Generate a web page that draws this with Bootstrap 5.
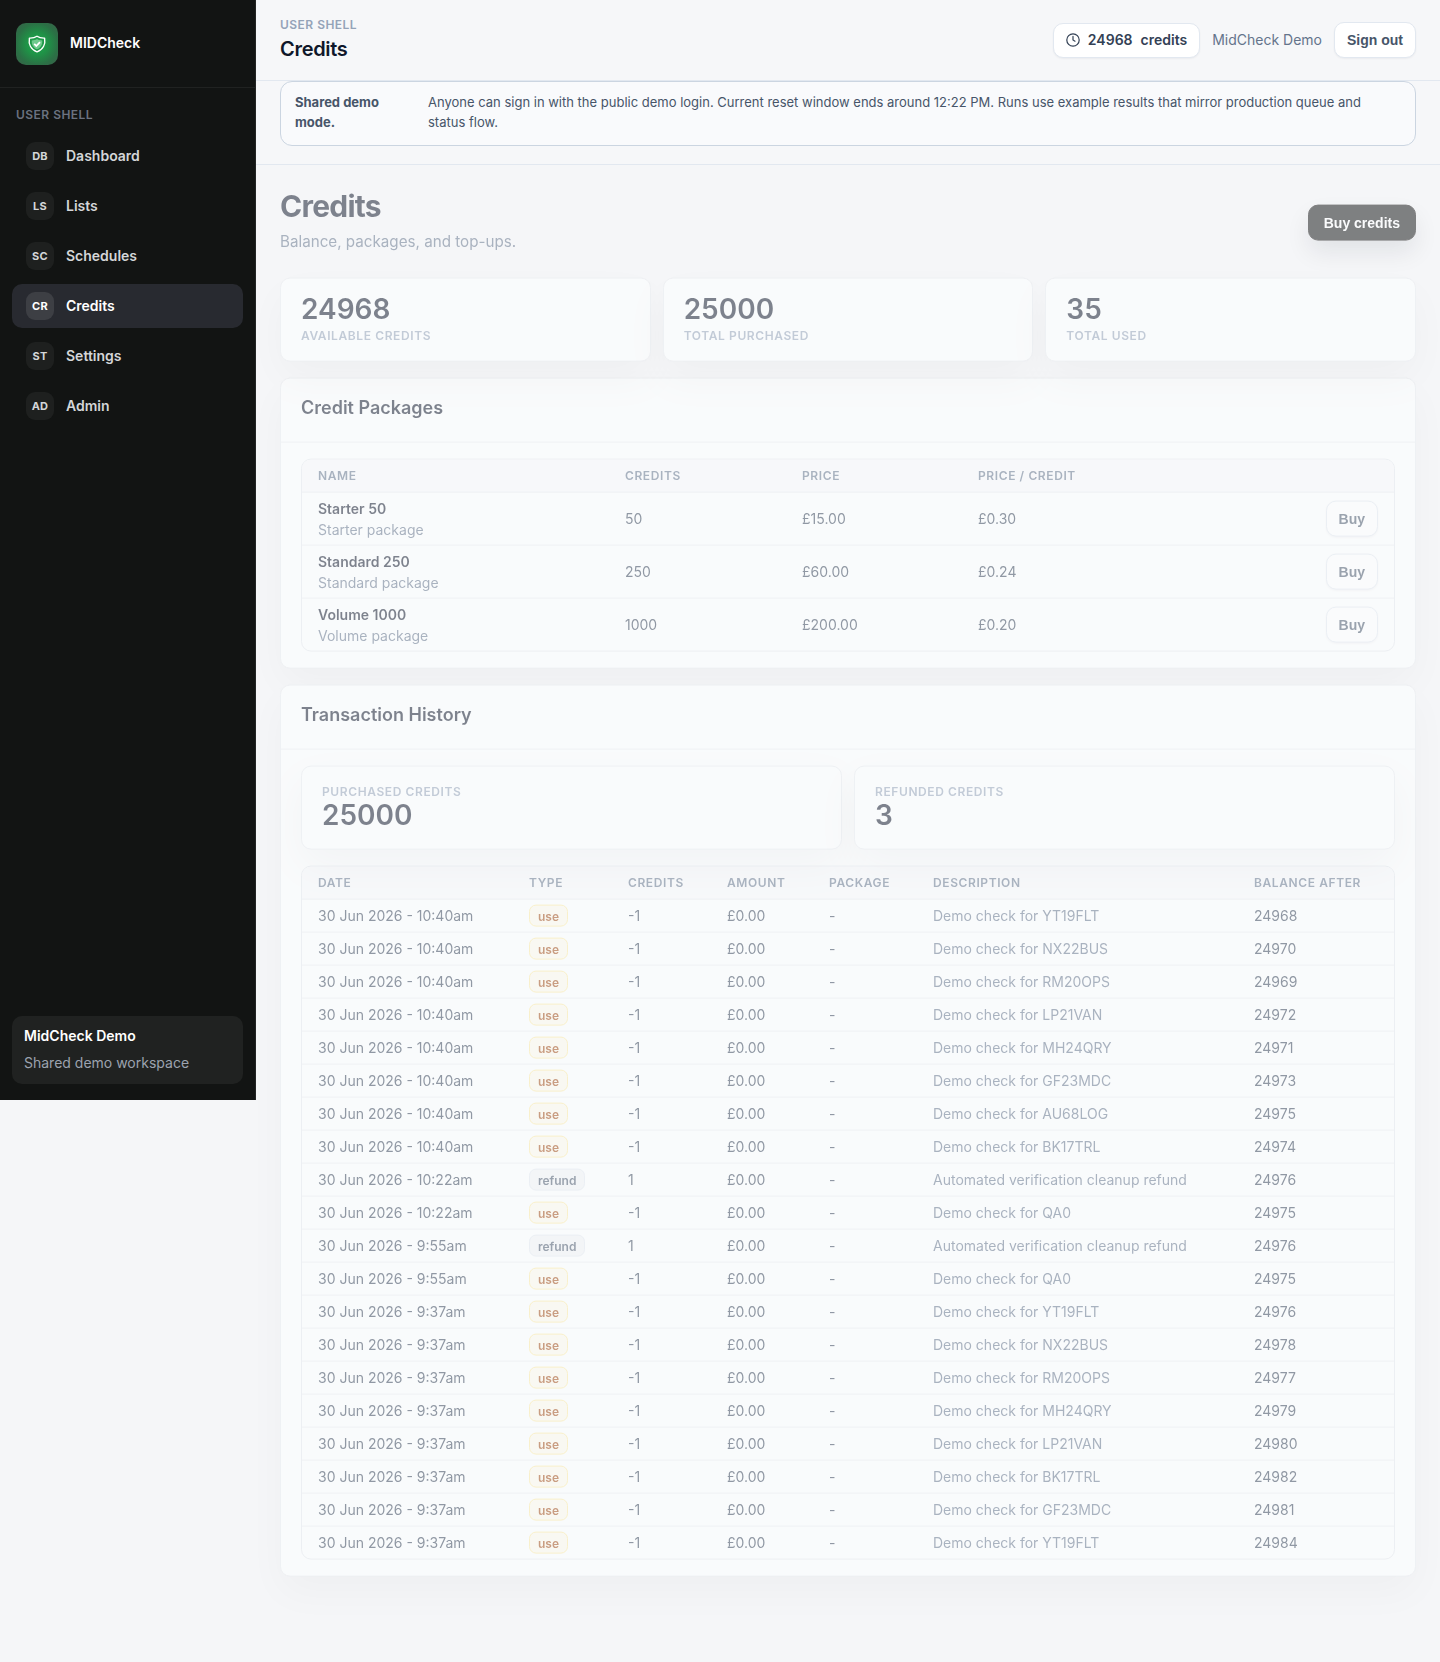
<!DOCTYPE html>

<html lang="en">
<head>
  <meta charset="UTF-8">
  <meta name="viewport" content="width=device-width, initial-scale=1.0">
  <title>Credits - MIDCheck</title>
  <link href="https://cdn.jsdelivr.net/npm/bootstrap@5.3.3/dist/css/bootstrap.min.css" rel="stylesheet">
  <style>
    body {
      background-color: #f5f6f8;
      color: #0f172a;
      font-family: Inter, "Liberation Sans", sans-serif;
      font-size: 14px;
      line-height: 20px;
    }
    .app-shell {
      height: 1662px;
      overflow: hidden;
    }

    /* Sidebar */
    .sidebar {
      width: 256px;
      height: 1100px;
      background-color: #121413;
      border-right: 1px solid #232524;
    }
    .brand {
      height: 88px;
      gap: 12px;
      padding: 0 16px;
      border-bottom: 1px solid #202221;
    }
    .brand-logo {
      width: 42px;
      height: 42px;
      border-radius: 10px;
      background: radial-gradient(circle at center, #1ea34c 0%, #1f9447 35%, #2b7045 70%, #3b5f4a 100%);
    }
    .brand-name {
      margin-bottom: 2px;
    }
    .overline {
      font-size: 12px;
      line-height: 16px;
      font-weight: 600;
      letter-spacing: 0.05em;
      text-transform: uppercase;
      color: #94a3b8;
    }
    .shell-label {
      font-weight: 600;
      letter-spacing: 0.04em;
    }
    .sidebar .overline {
      color: #6b7280;
      padding: 19px 16px 11px;
    }
    .side-nav {
      gap: 6px;
      padding: 0 12px;
    }
    .side-link {
      height: 44px;
      gap: 12px;
      padding: 0 14px;
      border-radius: 10px;
      color: #d4d6d8;
      font-weight: 600;
      text-decoration: none;
    }
    .side-link.active {
      background-color: #282a30;
      color: #fff;
    }
    .side-code {
      width: 28px;
      height: 28px;
      border-radius: 9px;
      background-color: #1e201f;
      font-size: 11px;
      font-weight: 700;
      letter-spacing: 0.02em;
    }
    .side-link.active .side-code {
      background-color: #3d3f44;
    }
    .workspace {
      margin: 0 12px 16px;
      padding: 10px 12px 11px;
      height: 68px;
      border-radius: 10px;
      background-color: #202221;
      color: #fff;
      gap: 7px;
    }
    .workspace-note {
      color: #9ca3af;
    }

    /* Top bar */
    .topbar {
      height: 81px;
      padding: 0 24px;
      border-bottom: 1px solid #e2e8f0;
      background-color: #f6f7f9;
    }
    .topbar-heading {
      margin-bottom: 2px;
    }
    .topbar-title {
      font-size: 20px;
      line-height: 24px;
      font-weight: 600;
      letter-spacing: -0.015em;
      margin-top: 4px;
    }
    .topbar-tools {
      gap: 12px;
    }
    .credit-pill {
      height: 35px;
      padding: 0 12px;
      border: 1px solid #e2e8f0;
      border-radius: 10px;
      background-color: #fff;
      color: #334155;
      font-weight: 600;
      box-shadow: 0 1px 2px rgba(15, 23, 42, 0.05);
    }
    .btn-plain {
      height: 36px;
      padding: 0 12px;
      border: 1px solid #e2e8f0;
      border-radius: 10px;
      background-color: #fff;
      color: #475569;
      font: 700 14px/1 "Liberation Sans", Arial, sans-serif;
      box-shadow: 0 1px 2px rgba(15, 23, 42, 0.05);
    }
    .notice-wrap {
      height: 84px;
      padding: 0 24px;
      border-bottom: 1px solid #e2e8f0;
      background-color: #f6f7f9;
    }
    .notice {
      height: 65px;
      gap: 12px;
      padding: 10px 14px;
      border: 1px solid #cbd5e1;
      border-radius: 12px;
      background-color: #f9fafc;
      color: #475569;
      font-size: 13px;
    }
    .notice strong {
      flex: 0 0 121px;
      padding-right: 20px;
      font-weight: 700;
    }

    /* Page content, half way through its fade in */
    .page-body {
      padding: 23px 24px 0;
      opacity: 0.52;
      transform: translateY(-0.4px);
      will-change: transform, opacity;
    }
    .page-title {
      font-size: 30px;
      line-height: 36px;
      font-weight: 700;
      letter-spacing: -0.025em;
      margin: 0 0 7px;
    }
    .page-sub {
      font-size: 15.2px;
      line-height: 22px;
      color: #64748b;
    }
    .page-head {
      height: 90px;
    }
    .btn-buy {
      height: 36px;
      padding: 0 15px;
      margin-top: 17px;
      border: 1px solid #111;
      border-radius: 10px;
      background-color: #111213;
      color: #fff;
      font: 700 14px/1 "Liberation Sans", Arial, sans-serif;
      box-shadow: 0 12px 24px rgba(15, 23, 42, 0.16);
    }
    .surface {
      border: 1px solid #e8ebef;
      border-radius: 10px;
      background-color: #feffff;
      box-shadow: 0 16px 40px rgba(15, 23, 42, 0.06);
    }
    .stats {
      display: grid;
      grid-auto-flow: column;
      grid-auto-columns: 1fr;
      gap: 12px;
    }
    .stat-box {
      height: 84px;
      padding: 14px 20px;
    }
    .stat-value {
      font-size: 28px;
      line-height: 32px;
      font-weight: 600;
    }
    .stat-box .overline {
      margin-top: 3px;
    }
    .stats-inner .stat-box {
      padding-top: 14px;
    }
    .stats-inner .stat-value {
      line-height: 30px;
    }
    .panel {
      margin-top: 16px;
    }
    .panel-head {
      height: 64px;
      padding: 17px 20px 0;
      border-bottom: 1px solid #e8ebef;
      font-size: 18px;
      line-height: 24px;
      font-weight: 600;
    }
    .panel-content {
      padding: 16px 20px;
    }
    .table-frame {
      border: 1px solid #e4e8ed;
      border-radius: 10px;
      overflow: hidden;
      background-color: #feffff;
    }
    .data-table {
      width: 100%;
      table-layout: fixed;
      border-collapse: separate;
      border-spacing: 0;
      color: #334155;
    }
    .data-table th {
      height: 33px;
      padding: 0 16px;
      border-bottom: 1px solid #e8ebef;
      background-color: #f9fafc;
      color: #64748b;
      font-size: 12px;
      font-weight: 600;
      letter-spacing: 0.05em;
      text-transform: uppercase;
      white-space: nowrap;
    }
    .data-table td {
      height: 33px;
      padding: 0 16px;
      border-bottom: 1px solid #e8ebef;
      white-space: nowrap;
    }
    .packages td {
      height: 53px;
      padding-bottom: 1px;
    }
    .data-table tr:last-child td {
      height: 32px;
      border-bottom: 0;
    }
    .packages tbody tr:last-child td {
      height: 52px;
    }
    .packages .btn-plain {
      margin-top: 1px;
      vertical-align: middle;
    }
    .package-name {
      color: #0f172a;
      font-weight: 600;
      line-height: 22px;
    }
    .soft-text {
      color: #64748b;
    }
    .type-tag {
      display: inline-block;
      height: 22px;
      padding: 0 8px;
      border: 1px solid #e2e8f0;
      border-radius: 7px;
      background-color: #f1f3f6;
      color: #475569;
      font-size: 12px;
      line-height: 21px;
      font-weight: 600;
      vertical-align: middle;
    }
    .type-use {
      border-color: #fdeaa0;
      background-color: #fefaec;
      color: #a14a14;
    }

    /* Column widths */
    .packages .col-name { width: 307px; }
    .packages .col-credits { width: 177px; }
    .packages .col-price { width: 176px; }
    .packages .col-unit { width: 270px; }
    .history .col-date { width: 211px; }
    .history .col-type { width: 99px; }
    .history .col-credits { width: 99px; }
    .history .col-amount { width: 102px; }
    .history .col-package { width: 104px; }
    .history .col-text { width: 321px; }
  </style>
</head>
<body>

  <div class="app-shell d-flex align-items-start">

    <!-- Sidebar -->

    <aside class="sidebar d-flex flex-column flex-shrink-0">
      <div class="brand d-flex align-items-center">
        <span class="brand-logo d-flex align-items-center justify-content-center">
          <svg width="20" height="20" viewBox="0 0 20 20" fill="none">
            <path d="M10 2.2C12.2 3.8 14.8 4.2 17.6 4.1C18.6 9.8 16.4 15.4 10 17.8C3.6 15.4 1.4 9.8 2.4 4.1C5.2 4.2 7.8 3.8 10 2.2Z" stroke="#fff" stroke-width="1.4" stroke-linejoin="round"/>
            <path d="M10 5C11.6 6.1 13.3 6.4 15.2 6.4C15.6 10.2 14 13.6 10 15.3C6 13.6 4.4 10.2 4.8 6.4C6.7 6.4 8.4 6.1 10 5Z" fill="#6fca8d"/>
            <path d="M7.2 9.9L9.3 12L13 8.1" stroke="#fff" stroke-width="1.8"/>
          </svg>
        </span>
        <span class="brand-name text-white fw-semibold">MIDCheck</span>
      </div>
      <div class="overline shell-label">User shell</div>
      <nav class="side-nav d-flex flex-column" id="sideNav"></nav>
      <div class="workspace d-flex flex-column mt-auto">
        <span class="fw-semibold">MidCheck Demo</span>
        <span class="workspace-note">Shared demo workspace</span>
      </div>
    </aside>

    <main class="flex-grow-1">

      <!-- Top bar -->

      <header class="topbar d-flex align-items-center justify-content-between">
        <div class="topbar-heading">
          <div class="overline shell-label">User shell</div>
          <div class="topbar-title">Credits</div>
        </div>
        <div class="topbar-tools d-flex align-items-center">
          <div class="credit-pill d-flex align-items-center gap-2">
            <svg width="14" height="14" viewBox="0 0 14 14" fill="none" stroke="#334155" stroke-width="1.2" stroke-linecap="round">
              <circle cx="7" cy="7" r="6.2"/>
              <path d="M7 3.4V7l2 1.2"/>
            </svg>
            <span>24968</span>
            <span>credits</span>
          </div>
          <span class="soft-text">MidCheck Demo</span>
          <button class="btn-plain" type="button">Sign out</button>
        </div>
      </header>

      <div class="notice-wrap">
        <div class="notice d-flex">
          <strong>Shared demo mode.</strong>
          <span>Anyone can sign in with the public demo login. Current reset window ends around 12:22 PM. Runs use example results that mirror production queue and status flow.</span>
        </div>
      </div>

      <!-- Credits page -->

      <div class="page-body">
        <div class="page-head d-flex justify-content-between align-items-start">
          <div>
            <h1 class="page-title">Credits</h1>
            <div class="page-sub">Balance, packages, and top-ups.</div>
          </div>
          <button class="btn-buy" type="button">Buy credits</button>
        </div>

        <div class="stats">
          <div class="surface stat-box">
            <div class="stat-value">24968</div>
            <div class="overline">Available credits</div>
          </div>
          <div class="surface stat-box">
            <div class="stat-value">25000</div>
            <div class="overline">Total purchased</div>
          </div>
          <div class="surface stat-box">
            <div class="stat-value">35</div>
            <div class="overline">Total used</div>
          </div>
        </div>

        <section class="surface panel">
          <div class="panel-head">Credit Packages</div>
          <div class="panel-content">
            <div class="table-frame">
              <table class="data-table packages">
                <thead>
                  <tr>
                    <th class="col-name">Name</th>
                    <th class="col-credits">Credits</th>
                    <th class="col-price">Price</th>
                    <th class="col-unit">Price / credit</th>
                    <th></th>
                  </tr>
                </thead>
                <tbody id="packageRows"></tbody>
              </table>
            </div>
          </div>
        </section>

        <section class="surface panel">
          <div class="panel-head">Transaction History</div>
          <div class="panel-content">
            <div class="stats stats-inner mb-3">
              <div class="surface stat-box">
                <div class="overline">Purchased credits</div>
                <div class="stat-value">25000</div>
              </div>
              <div class="surface stat-box">
                <div class="overline">Refunded credits</div>
                <div class="stat-value">3</div>
              </div>
            </div>
            <div class="table-frame">
              <table class="data-table history">
                <thead>
                  <tr>
                    <th class="col-date">Date</th>
                    <th class="col-type">Type</th>
                    <th class="col-credits">Credits</th>
                    <th class="col-amount">Amount</th>
                    <th class="col-package">Package</th>
                    <th class="col-text">Description</th>
                    <th>Balance after</th>
                  </tr>
                </thead>
                <tbody id="historyRows"></tbody>
              </table>
            </div>
          </div>
        </section>
      </div>
    </main>
  </div>

  <script>
    // Sidebar links
    const links = [
      ['DB', 'Dashboard'], ['LS', 'Lists'], ['SC', 'Schedules'],
      ['CR', 'Credits'], ['ST', 'Settings'], ['AD', 'Admin']
    ];
    document.getElementById('sideNav').innerHTML = links.map(([code, label]) => `
      <a href="#" class="side-link d-flex align-items-center ${label === 'Credits' ? 'active' : ''}">
        <span class="side-code d-flex align-items-center justify-content-center">${code}</span>${label}
      </a>`).join('');

    // Credit packages
    const packages = [
      ['Starter', 50, '£15.00', '£0.30'],
      ['Standard', 250, '£60.00', '£0.24'],
      ['Volume', 1000, '£200.00', '£0.20']
    ];
    document.getElementById('packageRows').innerHTML = packages.map(([name, credits, price, unit]) => `
      <tr>
        <td><div class="package-name">${name} ${credits}</div><div class="soft-text">${name} package</div></td>
        <td>${credits}</td>
        <td>${price}</td>
        <td>${unit}</td>
        <td class="text-end"><button class="btn-plain" type="button">Buy</button></td>
      </tr>`).join('');

    // Transactions: time, description, balance
    const refund = 'Automated verification cleanup refund';
    const transactions = [
      ['10:40am', 'YT19FLT', 24968], ['10:40am', 'NX22BUS', 24970],
      ['10:40am', 'RM20OPS', 24969], ['10:40am', 'LP21VAN', 24972],
      ['10:40am', 'MH24QRY', 24971], ['10:40am', 'GF23MDC', 24973],
      ['10:40am', 'AU68LOG', 24975], ['10:40am', 'BK17TRL', 24974],
      ['10:22am', refund, 24976], ['10:22am', 'QA0', 24975],
      ['9:55am', refund, 24976], ['9:55am', 'QA0', 24975],
      ['9:37am', 'YT19FLT', 24976], ['9:37am', 'NX22BUS', 24978],
      ['9:37am', 'RM20OPS', 24977], ['9:37am', 'MH24QRY', 24979],
      ['9:37am', 'LP21VAN', 24980], ['9:37am', 'BK17TRL', 24982],
      ['9:37am', 'GF23MDC', 24981], ['9:37am', 'YT19FLT', 24984]
    ];
    document.getElementById('historyRows').innerHTML = transactions.map(([time, what, balance]) => {
      const isRefund = what === refund;
      return `
      <tr>
        <td>30 Jun 2026 - ${time}</td>
        <td><span class="type-tag ${isRefund ? '' : 'type-use'}">${isRefund ? 'refund' : 'use'}</span></td>
        <td>${isRefund ? '1' : '-1'}</td>
        <td>£0.00</td>
        <td>-</td>
        <td class="soft-text">${isRefund ? what : 'Demo check for ' + what}</td>
        <td>${balance}</td>
      </tr>`;
    }).join('');
  </script>

  <script src="https://cdn.jsdelivr.net/npm/bootstrap@5.3.3/dist/js/bootstrap.bundle.min.js"></script>

</body>
</html>
